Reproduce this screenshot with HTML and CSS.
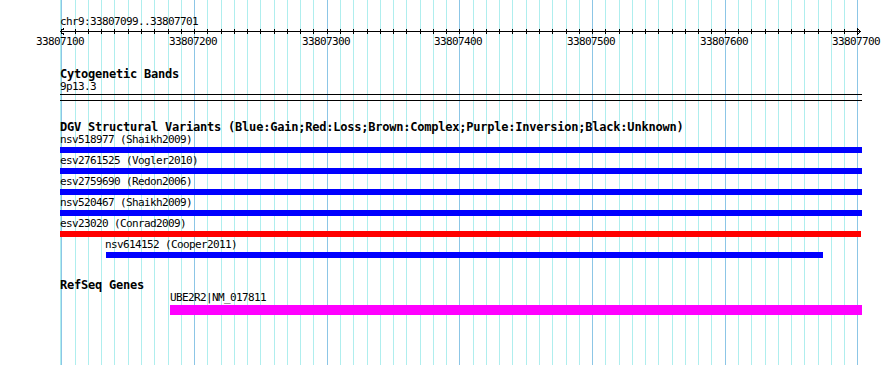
FILE: index.html
```html
<!DOCTYPE html>
<html lang="en">
<head>
  <meta charset="UTF-8" />
  <title>chr9:33807099..33807701</title>
  <link rel="stylesheet" href="styles.css">
</head>
<body>
  <div class="browser">
    <!-- grid: one line every 10 bp, darker every 100 bp -->
    <svg class="grid" width="890" height="365" viewBox="0 0 890 365">
      <path class="grid-minor" d="M60.5 0V365M75.5 0V365M88.5 0V365M101.5 0V365M114.5 0V365M128.5 0V365M141.5 0V365M154.5 0V365M168.5 0V365M181.5 0V365M207.5 0V365M221.5 0V365M234.5 0V365M247.5 0V365M260.5 0V365M274.5 0V365M287.5 0V365M300.5 0V365M313.5 0V365M340.5 0V365M353.5 0V365M367.5 0V365M380.5 0V365M393.5 0V365M406.5 0V365M420.5 0V365M433.5 0V365M446.5 0V365M473.5 0V365M486.5 0V365M499.5 0V365M512.5 0V365M526.5 0V365M539.5 0V365M552.5 0V365M566.5 0V365M579.5 0V365M605.5 0V365M619.5 0V365M632.5 0V365M645.5 0V365M658.5 0V365M672.5 0V365M685.5 0V365M698.5 0V365M711.5 0V365M738.5 0V365M751.5 0V365M765.5 0V365M778.5 0V365M791.5 0V365M804.5 0V365M818.5 0V365M831.5 0V365M844.5 0V365"/>
      <path class="grid-major" d="M61.5 0V365M194.5 0V365M327.5 0V365M459.5 0V365M592.5 0V365M725.5 0V365M857.5 0V365"/>
    </svg>

    <div class="tracks">
      <div class="locus text">chr9:33807099..33807701</div>

      <svg class="axis" width="890" height="9" viewBox="0 0 890 9">
        <path d="M60 4.5H861M64 1.5L60.5 4.5L64 7.5M857 1.5L860.5 4.5L857 7.5"/>
        <path d="M61.5 2V7M75.5 2V7M88.5 2V7M101.5 2V7M114.5 2V7M128.5 2V7M141.5 2V7M154.5 2V7M168.5 2V7M181.5 2V7M194.5 2V7M207.5 2V7M221.5 2V7M234.5 2V7M247.5 2V7M260.5 2V7M274.5 2V7M287.5 2V7M300.5 2V7M313.5 2V7M327.5 2V7M340.5 2V7M353.5 2V7M367.5 2V7M380.5 2V7M393.5 2V7M406.5 2V7M420.5 2V7M433.5 2V7M446.5 2V7M459.5 2V7M473.5 2V7M486.5 2V7M499.5 2V7M512.5 2V7M526.5 2V7M539.5 2V7M552.5 2V7M566.5 2V7M579.5 2V7M592.5 2V7M605.5 2V7M619.5 2V7M632.5 2V7M645.5 2V7M658.5 2V7M672.5 2V7M685.5 2V7M698.5 2V7M711.5 2V7M725.5 2V7M738.5 2V7M751.5 2V7M765.5 2V7M778.5 2V7M791.5 2V7M804.5 2V7M818.5 2V7M831.5 2V7M844.5 2V7M857.5 2V7"/>
      </svg>

      <div class="scale text">
        <span class="scale-label" style="left: 36px">33807100</span>
        <span class="scale-label" style="left: 169px">33807200</span>
        <span class="scale-label" style="left: 302px">33807300</span>
        <span class="scale-label" style="left: 434px">33807400</span>
        <span class="scale-label" style="left: 567px">33807500</span>
        <span class="scale-label" style="left: 700px">33807600</span>
        <span class="scale-label" style="left: 832px">33807700</span>
      </div>

      <section class="track track-cyto">
        <h3 class="track-title">Cytogenetic Bands</h3>
        <div class="text label">9p13.3</div>
        <div class="band"></div>
      </section>

      <section class="track track-dgv">
        <h3 class="track-title">DGV Structural Variants (Blue:Gain;Red:Loss;Brown:Complex;Purple:Inversion;Black:Unknown)</h3>
        <div class="feature">
          <div class="text label">nsv518977 (Shaikh2009)</div>
          <div class="bar gain" style="margin-left: 0; width: 802px"></div>
        </div>
        <div class="feature">
          <div class="text label">esv2761525 (Vogler2010)</div>
          <div class="bar gain" style="margin-left: 0; width: 802px"></div>
        </div>
        <div class="feature">
          <div class="text label">esv2759690 (Redon2006)</div>
          <div class="bar gain" style="margin-left: 0; width: 802px"></div>
        </div>
        <div class="feature">
          <div class="text label">nsv520467 (Shaikh2009)</div>
          <div class="bar gain" style="margin-left: 0; width: 802px"></div>
        </div>
        <div class="feature">
          <div class="text label">esv23020 (Conrad2009)</div>
          <div class="bar loss" style="margin-left: 0; width: 801px"></div>
        </div>
        <div class="feature" style="margin-left: 45px">
          <div class="text label">nsv614152 (Cooper2011)</div>
          <div class="bar gain" style="margin-left: 1px; width: 717px"></div>
        </div>
      </section>

      <section class="track track-refseq">
        <h3 class="track-title">RefSeq Genes</h3>
        <div class="feature" style="margin-left: 110px">
          <div class="text label">UBE2R2|NM_017811</div>
          <div class="bar gene" style="width: 692px"></div>
        </div>
      </section>
    </div>
  </div>
</body>
</html>
```

FILE: styles.css
```css
:root {
  --grid-minor: #afeeee;
  --grid-major: #8cc6e6;
  --gain: #0000ff;
  --loss: #ff0000;
  --gene: #ff00ff;
}

* {
  box-sizing: border-box;
  margin: 0;
  padding: 0;
}

body {
  background: #ffffff;
  color: #000000;
  font-family: 'DejaVu Sans Mono', 'Liberation Mono', monospace;
}

.browser {
  position: relative;
  width: 890px;
  height: 365px;
  overflow: hidden;
}

.grid {
  position: absolute;
  top: 0;
  left: 0;
  shape-rendering: crispEdges;
}

.grid-minor {
  stroke: var(--grid-minor);
  stroke-width: 1;
}

.grid-major {
  stroke: var(--grid-major);
  stroke-width: 1;
}

.tracks {
  position: relative;
}

.text {
  font-size: 11px;
  line-height: 11px;
  letter-spacing: -0.62px;
  white-space: nowrap;
}

.locus {
  padding: 16px 0 0 60px;
}

.axis {
  display: block;
  shape-rendering: crispEdges;
}

.axis path {
  stroke: #000000;
  stroke-width: 1;
  fill: none;
}

.scale {
  position: relative;
  height: 11px;
}

.scale-label {
  position: absolute;
  top: 0;
}

.track {
  padding-left: 60px;
}

.track-title {
  font-size: 12px;
  line-height: 12px;
  font-weight: 700;
  letter-spacing: -0.22px;
  white-space: nowrap;
}

.track-cyto {
  margin-top: 21px;
}

.track-cyto .label {
  margin-top: 1px;
}

.band {
  width: 802px;
  height: 7px;
  margin-top: 2px;
  border-top: 1px solid #000000;
  border-bottom: 1px solid #000000;
}

.track-dgv {
  margin-top: 20px;
}

.track-dgv .track-title {
  margin-bottom: 1px;
}

.feature {
  padding-bottom: 2px;
}

.bar {
  height: 6px;
  margin-top: 2px;
}

.bar.gain {
  background: var(--gain);
}

.bar.loss {
  background: var(--loss);
}

.track-refseq {
  margin-top: 19px;
}

.track-refseq .label {
  margin-top: 1px;
}

.bar.gene {
  height: 10px;
  margin-top: 2px;
  background: var(--gene);
}
```
